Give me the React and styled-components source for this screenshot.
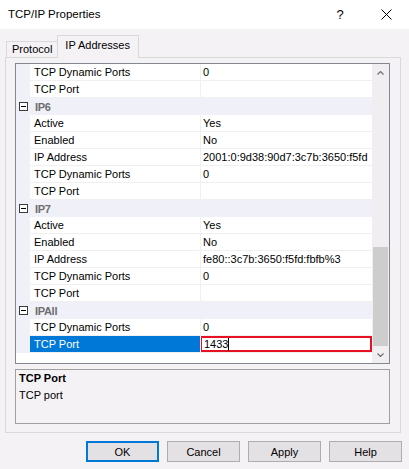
import React from 'react';
import styled, { createGlobalStyle } from 'styled-components';

const GlobalStyle = createGlobalStyle`
  html, body {
    margin: 0;
    padding: 0;
    background: #f5f2f5;
  }
  body {
    font-family: "Liberation Sans", Arial, sans-serif;
    font-size: 11px;
    color: #000;
  }
`;

const rows = [
  { name: 'TCP Dynamic Ports', value: '0' },
  { name: 'TCP Port', value: '' },
  { category: 'IP6' },
  { name: 'Active', value: 'Yes' },
  { name: 'Enabled', value: 'No' },
  { name: 'IP Address', value: '2001:0:9d38:90d7:3c7b:3650:f5fd' },
  { name: 'TCP Dynamic Ports', value: '0' },
  { name: 'TCP Port', value: '' },
  { category: 'IP7' },
  { name: 'Active', value: 'Yes' },
  { name: 'Enabled', value: 'No' },
  { name: 'IP Address', value: 'fe80::3c7b:3650:f5fd:fbfb%3' },
  { name: 'TCP Dynamic Ports', value: '0' },
  { name: 'TCP Port', value: '' },
  { category: 'IPAll' },
  { name: 'TCP Dynamic Ports', value: '0' },
  { name: 'TCP Port', value: '1433', selected: true },
];

const Chevron = ({ down }) => (
  <svg width="7" height="4" viewBox="0 0 7 4">
    <path
      d={down ? 'M0.5 0.5 L3.5 3.5 L6.5 0.5' : 'M0.5 3.5 L3.5 0.5 L6.5 3.5'}
      fill="none"
      stroke="#707070"
      strokeWidth="1.2"
    />
  </svg>
);

const App = () => {
  return (
    <Window>
      <GlobalStyle />
      <TitleBar>
        <Title>TCP/IP Properties</Title>
        <CaptionButton>?</CaptionButton>
        <CaptionButton>
          <svg width="11" height="11" viewBox="0 0 11 11">
            <path d="M0.5 0.5 L10.5 10.5 M10.5 0.5 L0.5 10.5" stroke="#000" strokeWidth="1" />
          </svg>
        </CaptionButton>
      </TitleBar>

      <TabStrip>
        <Tab>Protocol</Tab>
        <Tab active>IP Addresses</Tab>
      </TabStrip>

      <TabPage>
        <PropertyGrid>
          <RowList>
            {rows.map((row, i) =>
              row.category ? (
                <CategoryRow key={i}>
                  <Gutter>
                    <Collapse />
                  </Gutter>
                  <CategoryLabel>{row.category}</CategoryLabel>
                </CategoryRow>
              ) : (
                <Row key={i}>
                  <Gutter />
                  <NameCell selected={row.selected}>{row.name}</NameCell>
                  <ValueCell>
                    {row.selected ? (
                      <EditBox>
                        {row.value}
                        <Caret />
                      </EditBox>
                    ) : (
                      row.value
                    )}
                  </ValueCell>
                </Row>
              )
            )}
          </RowList>
          <ScrollBar>
            <ScrollArrow>
              <Chevron />
            </ScrollArrow>
            <ScrollTrack>
              <ScrollThumb />
            </ScrollTrack>
            <ScrollArrow>
              <Chevron down />
            </ScrollArrow>
          </ScrollBar>
        </PropertyGrid>

        <Description>
          <DescTitle>TCP Port</DescTitle>
          <DescText>TCP port</DescText>
        </Description>
      </TabPage>

      <ButtonRow>
        <Button primary>OK</Button>
        <Button>Cancel</Button>
        <Button>Apply</Button>
        <Button>Help</Button>
      </ButtonRow>
    </Window>
  );
};

const Window = styled.div`
  width: 409px;
  height: 469px;
  display: flex;
  flex-direction: column;
  background: #f5f2f5;
  overflow: hidden;
`;

const TitleBar = styled.div`
  height: 29px;
  flex: 0 0 auto;
  display: flex;
  align-items: center;
  background: #fff;
  padding-left: 8px;
`;

const Title = styled.div`
  flex: 1;
  font-size: 11.5px;
  padding-bottom: 1px;
`;

const CaptionButton = styled.div`
  width: 46px;
  height: 29px;
  display: flex;
  align-items: center;
  justify-content: center;
  font-size: 13px;
`;

const TabStrip = styled.div`
  height: 28px;
  flex: 0 0 auto;
  display: flex;
  align-items: flex-end;
  padding-left: 6px;
  position: relative;
  z-index: 1;
`;

const Tab = styled.div`
  box-sizing: border-box;
  height: ${(p) => (p.active ? '23px' : '16px')};
  margin-bottom: ${(p) => (p.active ? '-1px' : '0')};
  margin-left: ${(p) => (p.active ? '-1px' : '0')};
  padding: ${(p) => (p.active ? '2px 8px 0 7px' : '0 5px 0 5px')};
  border: 1px solid #d9d9d9;
  border-bottom: none;
  background: #f5f2f5;
  line-height: 15px;
  white-space: nowrap;
`;

const TabPage = styled.div`
  box-sizing: border-box;
  margin-left: 5px;
  width: 396px;
  height: 376px;
  flex: 0 0 auto;
  border: 1px solid #d9d9d9;
  padding: 5px 10px 8px 9px;
  display: flex;
  flex-direction: column;
  gap: 5px;
`;

const PropertyGrid = styled.div`
  box-sizing: border-box;
  height: 301px;
  border: 1px solid #828790;
  display: flex;
  background: #fff;
`;

const RowList = styled.div`
  flex: 1;
  display: flex;
  flex-direction: column;
  background: #fff;
`;

const Row = styled.div`
  height: 17px;
  display: grid;
  grid-template-columns: 14px 171px 1fr;
`;

const CategoryRow = styled.div`
  height: 17px;
  display: flex;
  align-items: center;
  background: #f0f0f8;
`;

const Gutter = styled.div`
  width: 14px;
  height: 17px;
  flex: 0 0 auto;
  display: flex;
  align-items: center;
  background: #f0f0f8;
`;

const Collapse = styled.div`
  box-sizing: border-box;
  width: 9px;
  height: 9px;
  margin-left: 3px;
  border: 1px solid #3c3c3c;
  background: #fff;
  display: flex;
  align-items: center;
  justify-content: center;

  &::after {
    content: '';
    width: 5px;
    height: 1px;
    background: #000;
  }
`;

const CategoryLabel = styled.div`
  padding-left: 5px;
  font-weight: bold;
  color: #6d6d6d;
  letter-spacing: -0.3px;
`;

const NameCell = styled.div`
  box-sizing: border-box;
  height: 17px;
  padding-left: 4px;
  line-height: 16px;
  white-space: nowrap;
  overflow: hidden;
  border-right: 1px solid #f0f0f0;
  border-bottom: 1px solid #f0f0f0;
  background: ${(p) => (p.selected ? '#0078d7' : '#fff')};
  color: ${(p) => (p.selected ? '#fff' : '#000')};
`;

const ValueCell = styled.div`
  box-sizing: border-box;
  height: 17px;
  padding-left: 2px;
  line-height: 16px;
  white-space: nowrap;
  overflow: hidden;
  border-bottom: 1px solid #f0f0f0;
  position: relative;
`;

const EditBox = styled.div`
  position: absolute;
  left: -1px;
  top: 0;
  right: 0;
  bottom: 0;
  box-sizing: border-box;
  border: 2px solid #e81123;
  padding-left: 2px;
  line-height: 13px;
  display: flex;
  align-items: center;
  background: #fff;
`;

const Caret = styled.span`
  display: inline-block;
  width: 1px;
  height: 13px;
  background: #000;
`;

const ScrollBar = styled.div`
  width: 17px;
  flex: 0 0 auto;
  display: flex;
  flex-direction: column;
  background: #f0eef0;
`;

const ScrollArrow = styled.div`
  height: 17px;
  flex: 0 0 auto;
  display: flex;
  align-items: center;
  justify-content: center;
`;

const ScrollTrack = styled.div`
  flex: 1;
  display: flex;
  flex-direction: column;
  justify-content: flex-end;
  align-items: center;
`;

const ScrollThumb = styled.div`
  width: 15px;
  height: 99px;
  background: #cdcdcd;
`;

const Description = styled.div`
  box-sizing: border-box;
  height: 55px;
  border: 1px solid #a0a0a0;
  padding: 2px 3px;
`;

const DescTitle = styled.div`
  font-weight: bold;
  line-height: 13px;
`;

const DescText = styled.div`
  margin-top: 4px;
  line-height: 13px;
`;

const ButtonRow = styled.div`
  flex: 0 0 auto;
  margin-top: 8px;
  display: flex;
  justify-content: flex-end;
  gap: 8px;
  padding-right: 7px;
`;

const Button = styled.button`
  box-sizing: border-box;
  width: 73px;
  height: 21px;
  padding: 0;
  font-family: inherit;
  font-size: 11px;
  color: #000;
  background: #e4e1e4;
  border: ${(p) => (p.primary ? '2px solid #0078d7' : '1px solid #adadad')};
`;

export default App;
